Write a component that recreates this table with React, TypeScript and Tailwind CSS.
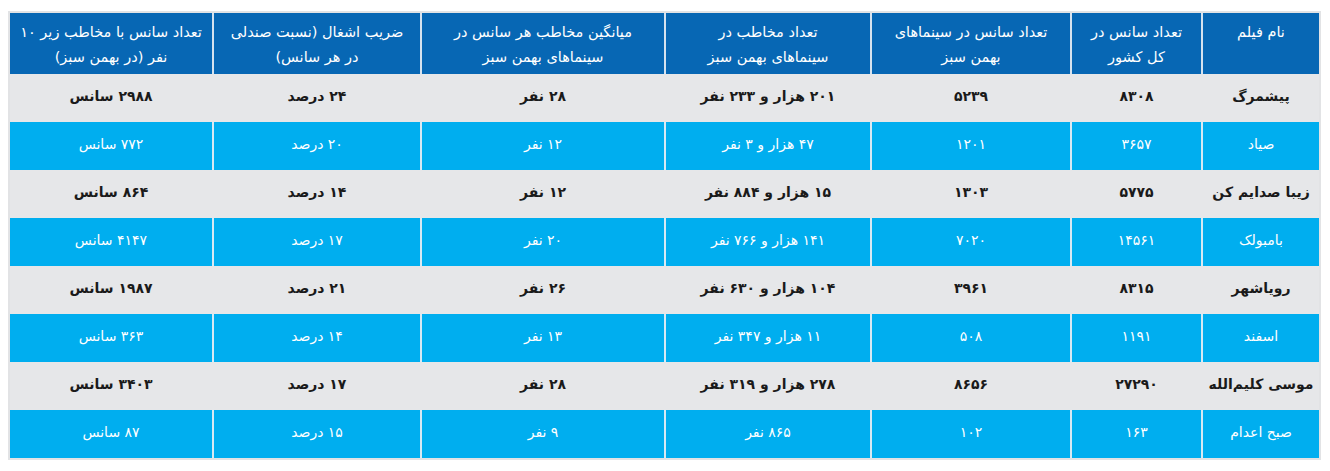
import React from "react";

type Row = {
  name: string;
  total: string;
  greenShows: string;
  audience: string;
  avg: string;
  occupancy: string;
  lowShows: string;
};

const headers: string[][] = [
  ["نام فیلم"],
  ["تعداد سانس در", "کل کشور"],
  ["تعداد سانس در سینماهای", "بهمن سبز"],
  ["تعداد مخاطب در", "سینماهای بهمن سبز"],
  ["میانگین مخاطب هر سانس در", "سینماهای بهمن سبز"],
  ["ضریب اشغال (نسبت صندلی", "در هر سانس)"],
  ["تعداد سانس با مخاطب زیر ۱۰", "نفر (در بهمن سبز)"],
];

const rows: Row[] = [
  { name: "پیشمرگ", total: "۸۳۰۸", greenShows: "۵۲۳۹", audience: "۲۰۱ هزار و ۲۳۳ نفر", avg: "۲۸ نفر", occupancy: "۲۴ درصد", lowShows: "۲۹۸۸ سانس" },
  { name: "صیاد", total: "۳۶۵۷", greenShows: "۱۲۰۱", audience: "۴۷ هزار و ۳ نفر", avg: "۱۲ نفر", occupancy: "۲۰ درصد", lowShows: "۷۷۲ سانس" },
  { name: "زیبا صدایم کن", total: "۵۷۷۵", greenShows: "۱۳۰۳", audience: "۱۵ هزار و ۸۸۴ نفر", avg: "۱۲ نفر", occupancy: "۱۴ درصد", lowShows: "۸۶۴ سانس" },
  { name: "بامبولک", total: "۱۴۵۶۱", greenShows: "۷۰۲۰", audience: "۱۴۱ هزار و ۷۶۶ نفر", avg: "۲۰ نفر", occupancy: "۱۷ درصد", lowShows: "۴۱۴۷ سانس" },
  { name: "رویاشهر", total: "۸۳۱۵", greenShows: "۳۹۶۱", audience: "۱۰۴ هزار و ۶۳۰ نفر", avg: "۲۶ نفر", occupancy: "۲۱ درصد", lowShows: "۱۹۸۷ سانس" },
  { name: "اسفند", total: "۱۱۹۱", greenShows: "۵۰۸", audience: "۱۱ هزار و ۳۴۷ نفر", avg: "۱۳ نفر", occupancy: "۱۴ درصد", lowShows: "۳۶۳ سانس" },
  { name: "موسی کلیم‌الله", total: "۲۷۲۹۰", greenShows: "۸۶۵۶", audience: "۲۷۸ هزار و ۳۱۹ نفر", avg: "۲۸ نفر", occupancy: "۱۷ درصد", lowShows: "۳۴۰۳ سانس" },
  { name: "صبح اعدام", total: "۱۶۳", greenShows: "۱۰۲", audience: "۸۶۵ نفر", avg: "۹ نفر", occupancy: "۱۵ درصد", lowShows: "۸۷ سانس" },
];

const App = () => {
  return (
    <div className="min-h-screen bg-white pl-2 pt-[11px]" style={{ fontFamily: '"DejaVu Sans", sans-serif' }}>
      <div
        dir="rtl"
        className="w-[1313px] border-2 border-[#e2e3e5] grid grid-cols-[118px_131px_200px_206px_244px_208px_202px]"
      >
        {/* header */}
        {headers.map((lines, i) => (
          <div
            key={i}
            className={`h-[61px] bg-[#0767b4] text-white text-[14.5px] leading-[25px] text-center pt-[7px] ${
              i < headers.length - 1 ? "border-l-2 border-[#d5e2ef]" : ""
            }`}
          >
            {lines.map((l, j) => (
              <div key={j}>{l}</div>
            ))}
          </div>
        ))}

        {/* body */}
        {rows.map((r, ri) => {
          const gray = ri % 2 === 0;
          const cells = [r.name, r.total, r.greenShows, r.audience, r.avg, r.occupancy, r.lowShows];
          return cells.map((c, ci) => (
            <div
              key={`${ri}-${ci}`}
              className={`h-[48px] flex items-center justify-center pb-[3px] text-[14px] ${
                gray ? "bg-[#e6e7e9] text-[#1a1a1a] font-bold" : "bg-[#00aeef] text-white"
              } ${ci < cells.length - 1 ? (gray ? "border-l-2 border-[#e6e7e9]" : "border-l-2 border-[#d8e9f3]") : ""}`}
            >
              {c}
            </div>
          ));
        })}
      </div>
    </div>
  );
};

export default App;
